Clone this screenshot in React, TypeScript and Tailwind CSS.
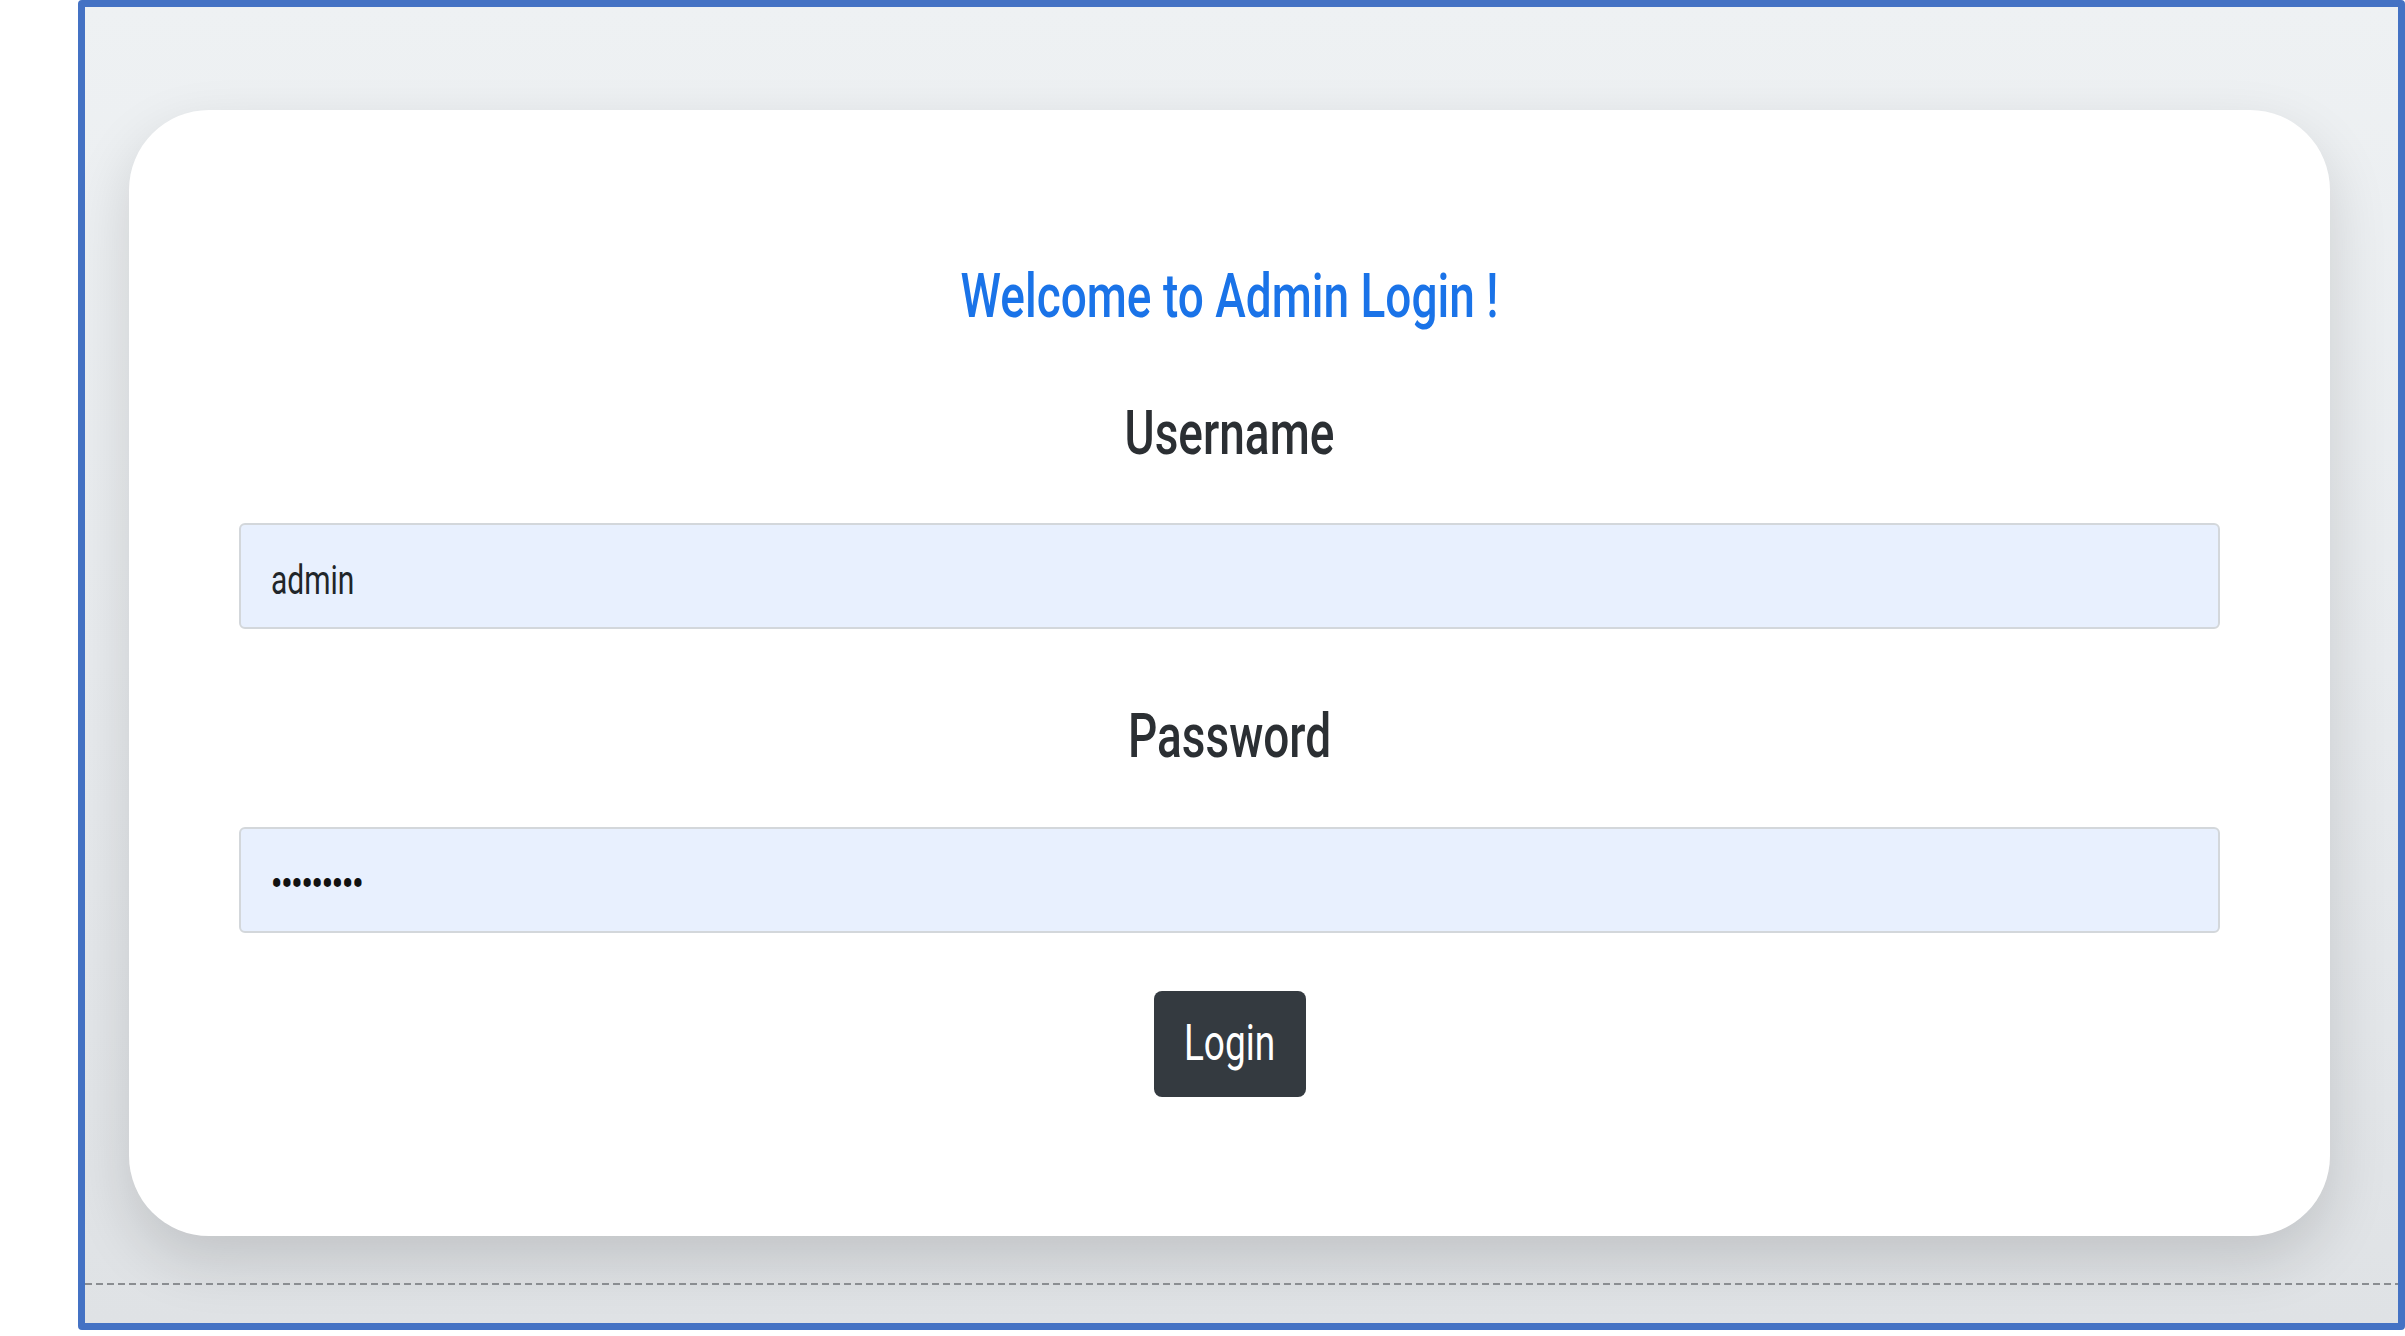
import React from 'react';

// Text in the capture is vertically stretched, so each label gets a scale-y.
function Stretched({ children, className }: { children: React.ReactNode; className?: string }) {
  return <span className={`inline-block origin-center ${className ?? ''}`}>{children}</span>;
}

function Field({ value, dots }: { value: string; dots?: boolean }) {
  return (
    <div className="h-[106px] w-full rounded-[6px] border-2 border-[#d3d7db] bg-[#e8f0fe] pl-[30px] pt-[8px] flex items-center">
      <Stretched
        className={
          dots
            ? 'text-[31px] leading-[36px] text-[#111] font-bold tracking-[-1px] scale-y-[1.2]'
            : 'text-[30px] leading-[36px] text-[#212529] scale-y-[1.35]'
        }
      >
        {value}
      </Stretched>
    </div>
  );
}

export default function App() {
  return (
    <div className="w-full h-[1336px] bg-white" style={{ fontFamily: 'Roboto, "Liberation Sans", sans-serif' }}>
      <div className="ml-[78px] w-[2327px] h-[1330px] border-[7px] border-[#4472c4] rounded-[4px] bg-gradient-to-b from-[#eef1f3] via-[#e8ebee] to-[#dfe2e5] flex flex-col">
        {/* Card */}
        <div className="mt-[103px] ml-[44px] w-[2201px] h-[1126px] bg-white rounded-[80px] shadow-[0_24px_60px_rgba(0,0,0,0.14)] px-[110px] flex flex-col items-center">
          <h1 className="mt-[158px] h-[56px] text-[46px] leading-[56px] font-medium text-[#1a73e8]">
            <Stretched className="scale-y-[1.33]">Welcome to Admin Login !</Stretched>
          </h1>

          <label className="mt-[81px] h-[56px] text-[46px] leading-[56px] font-medium text-[#2b2f33]">
            <Stretched className="scale-y-[1.33]">Username</Stretched>
          </label>
          <div className="mt-[62px] w-full">
            <Field value="admin" />
          </div>

          <label className="mt-[79px] h-[56px] text-[46px] leading-[56px] font-medium text-[#2b2f33]">
            <Stretched className="scale-y-[1.33]">Password</Stretched>
          </label>
          <div className="mt-[63px] w-full">
            <Field value="•••••••••" dots />
          </div>

          <button className="mt-[58px] w-[152px] h-[106px] rounded-[8px] bg-[#343a40] text-white flex items-center justify-center">
            <Stretched className="text-[37px] leading-[44px] scale-y-[1.35]">Login</Stretched>
          </button>
        </div>

        {/* Dashed divider */}
        <div className="mt-[47px] h-[2px] w-full bg-[repeating-linear-gradient(90deg,#8a8d91_0_7px,transparent_7px_11px)]" />
      </div>
    </div>
  );
}
